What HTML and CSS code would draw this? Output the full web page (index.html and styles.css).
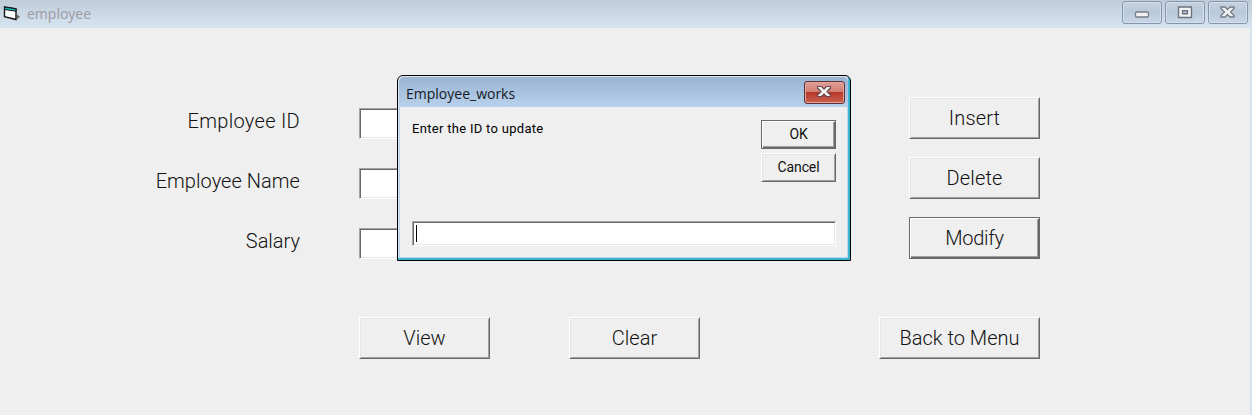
FILE: index.html
```html
<!DOCTYPE html>
<html lang="en">
<head>
<meta charset="utf-8">
<title>employee</title>
<link rel="stylesheet" href="styles.css">
</head>
<body>
<div class="window">
  <header class="titlebar">
    <svg class="app-icon" width="18" height="16" viewBox="0 0 18 16">
      <path d="M1.500 2L13 3.800V14.500L1.500 11.800Z" fill="#fff" stroke="#151515" stroke-width="1.4"/>
      <path d="M1.500 2L13 3.800V6.200L1.500 4.500Z" fill="#18b5b7" stroke="#151515" stroke-width="1"/>
      <path d="M14 9.500v4.500l3-2z" fill="#666"/>
    </svg>
    <span class="window-title">employee</span>
    <div class="controls">
      <span class="control"><svg width="38" height="21" viewBox="0 0 38 21"><rect x="12.5" y="10" width="13" height="5" rx="1.2" fill="#f1f1f1" stroke="#767b87" stroke-width="1.3"/></svg></span>
      <span class="control"><svg width="38" height="21" viewBox="0 0 38 21"><path d="M12.500 5h13v10.500h-13zM16.500 8.700v3h5v-3z" fill="#f1f1f1" fill-rule="evenodd" stroke="#6e7380" stroke-width="1.4" stroke-linejoin="round"/></svg></span>
      <span class="control"><svg width="38" height="21" viewBox="0 0 38 21"><path d="M12 5h4l2.500 2.500L21 5h4v1.500L21.500 10l3.500 3.500V15h-4l-2.500-2.500L16 15h-4v-1.500l3.500-3.500L12 6.500z" fill="#f1f1f1" stroke="#737884" stroke-width="1.3" stroke-linejoin="round"/></svg></span>
    </div>
  </header>
  <main class="form">
    <div class="row"><label class="label w-id" for="id">Employee ID</label><input class="input" id="id"><button class="button">Insert</button></div>
    <div class="row"><label class="label w-name" for="name">Employee Name</label><input class="input" id="name"><button class="button">Delete</button></div>
    <div class="row"><label class="label" for="salary">Salary</label><input class="input" id="salary"><button class="button default modify">Modify</button></div>
    <div class="actions"><button class="button">View</button><button class="button clear">Clear</button><button class="button back">Back to Menu</button></div>
  </main>
</div>
<section class="dialog">
  <header class="dialog-title"><span>Employee_works</span>
    <span class="close"><svg width="38" height="20" viewBox="0 0 38 20"><path d="M12.500 4.500h4L19 7l2.500-2.500h4V6L22 9.500l3.500 3.500v1.500h-4L19 12l-2.500 2.500h-4V13L16 9.500 12.500 6z" fill="#f5f5f5" stroke="#694b4d" stroke-width="1.2" stroke-linejoin="round"/></svg></span>
  </header>
  <div class="dialog-body">
    <div class="prompt-row"><span class="prompt">Enter the ID to update</span>
      <div class="dialog-buttons"><button class="button small default ok">OK</button><button class="button small">Cancel</button></div>
    </div>
    <div class="input answer"><span class="caret"></span></div>
  </div>
</section>
</body>
</html>
```
FILE: styles.css
```css
* { box-sizing: border-box; }
body { margin: 0; overflow: hidden; background: #efefef; font-family: Roboto, "Liberation Sans", sans-serif; }
.window { height: 415px; border-right: 2px solid #d4e2ef; }
.titlebar { display: flex; height: 28px; margin-right: -2px; padding: 0 4px 0 3px; background: linear-gradient(#bfcddb, #d7e4f2); }
.app-icon { margin-top: 5px; }
.window-title { margin-left: 6px; font: 14px/28px "Open Sans", sans-serif; color: #9b9b9f; letter-spacing: 0; }
.controls { display: flex; gap: 3px; margin-left: auto; padding-top: 1px; }
.control { width: 40px; height: 23px; border: 1px solid #8495b0; border-radius: 3px; background: linear-gradient(#c4d1df, #b9c9da 50%, #c9d7e7); box-shadow: inset 0 0 0 1px #d4dfea; }
.control svg, .close svg { display: block; }
.form { width: 1040px; padding-top: 69px; }
.row { display: flex; height: 42px; margin-bottom: 18px; }
.label { width: 300px; margin-right: 59px; padding-top: 11px; text-align: right; font-size: 20px; line-height: 26px; font-weight: 300; color: #111; white-space: nowrap; }
.input { width: 341px; height: 31px; margin-top: 11px; background: #fff; border: 1px solid; border-color: #a3a3a3 #fff #fff #a3a3a3; border-radius: 0; box-shadow: inset 1px 1px #696969, inset -1px -1px #e8e8e8; outline: none; }
.button { width: 131px; height: 42px; padding: 0 0 1px; background: #efefef; border: 1px solid; border-color: #fff #696969 #696969 #fff; border-radius: 0; box-shadow: inset 1px 1px #e5e5e5, inset -1px -1px #a0a0a0; color: #111; font: 300 20px/26px Roboto, sans-serif; white-space: nowrap; }
.row .button { margin-left: auto; letter-spacing: .15px; }
.row .modify { letter-spacing: -.3px; }
.button.default { border-color: #696969; box-shadow: inset 1px 1px #fff, inset -1px -1px #696969, inset -2px -2px #a0a0a0; }
.actions { display: flex; margin: 58px 0 0 359px; }
.clear { margin-left: 79px; }
.back { width: 161px; margin-left: auto; }
.w-id { letter-spacing: .3px; }
.w-name { letter-spacing: .05px; }
.dialog { position: absolute; left: 397px; top: 75px; width: 454px; height: 186px; border: 1px solid #000; border-radius: 6px 6px 0 0; background: #efefef; box-shadow: inset -2px -2px #39b5cf, inset 1px 1px #dbe7f3, inset -3px -3px #b9d8ed, inset 2px 0 #bdd4ee; }
.dialog-title { display: flex; height: 30px; margin: 1px 2px 0 1px; padding: 0 3px 0 7px; border-radius: 5px 5px 0 0; background: linear-gradient(#98b4d2, #b9d1ec); color: #151923; font: 14px/33px "Open Sans", sans-serif; }
.close { width: 41px; height: 23px; margin: 4px 0 0 auto; border: 1px solid #5f3036; border-radius: 3px; background: linear-gradient(#dfa198, #d27c70 47%, #b5392a 50%, #cc6352); box-shadow: inset 0 0 0 1px #e0a49b; }
.dialog-body { padding: 13px 14px 0; }
.prompt-row { display: flex; justify-content: space-between; height: 89px; }
.prompt { font-size: 13px; line-height: 17px; letter-spacing: .3px; color: #000; }
.dialog-buttons { display: flex; flex-direction: column; gap: 4px; }
.small { width: 75px; height: 29px; font-size: 14px; font-weight: 400; line-height: 18px; letter-spacing: -.1px; }
.ok { padding-bottom: 2px; }
.answer { width: 424px; height: 25px; margin: 12px 0 0; padding: 3px 3px; }
.caret { display: block; width: 1px; height: 17px; background: #000; }
```
